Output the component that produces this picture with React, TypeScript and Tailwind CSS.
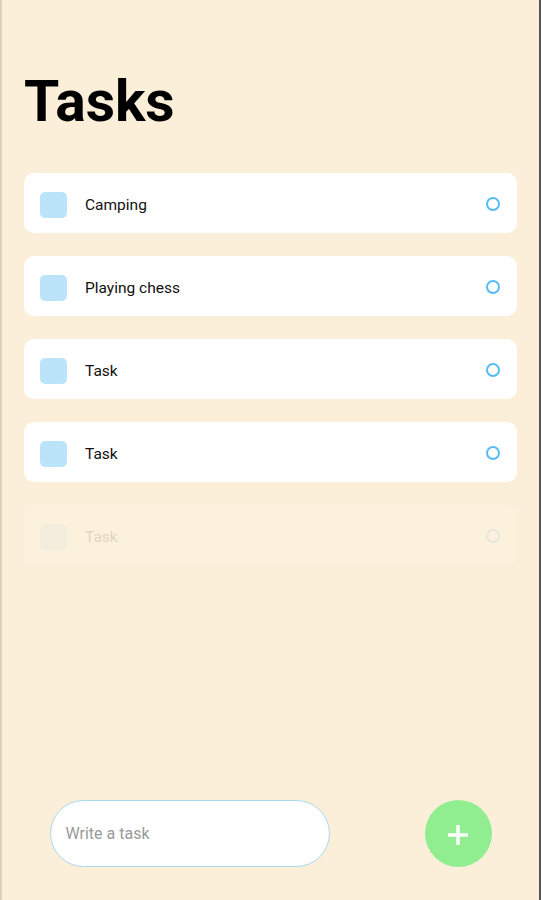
import React from "react";

const tasks = [
  { text: "Camping", faded: false },
  { text: "Playing chess", faded: false },
  { text: "Task", faded: false },
  { text: "Task", faded: false },
  { text: "Task", faded: true },
];

function TaskItem({ text, faded }: { text: string; faded: boolean }) {
  return (
    <div
      className={
        "flex h-[60px] items-center justify-between rounded-[10px] bg-white pl-4 pr-[17px] " +
        (faded ? "opacity-[0.12]" : "")
      }
    >
      <div className="flex items-center">
        <div className="mt-[3px] h-[26px] w-[27px] rounded-[5px] bg-[#55BCF6]/40" />
        <span className="ml-[18px] mt-[6px] text-[15.5px] text-[#111]">{text}</span>
      </div>
      <div className="mt-[1px] h-[14px] w-[14px] rounded-full border-[2.5px] border-[#55BCF6]" />
    </div>
  );
}

export default function App() {
  return (
    <div
      className="flex h-[900px] w-full flex-col border-l-2 border-r-2 border-l-[#ddd0ba] border-r-[#555] bg-[#fcefd9]"
      style={{ fontFamily: "Roboto, 'Noto Sans', sans-serif" }}
    >
      <div className="flex-1 px-[22px] pt-[70px]">
        <h1 className="text-[57px] font-bold leading-[64px] text-black">Tasks</h1>
        <div className="mt-[39px] flex flex-col gap-[23px]">
          {tasks.map((t, i) => (
            <TaskItem key={i} text={t.text} faded={t.faded} />
          ))}
        </div>
      </div>
      <div className="flex items-center justify-around pb-[33px]">
        <div className="flex h-[67px] w-[280px] items-center rounded-full border border-[#a9d9ef] bg-white px-[15px]">
          <span className="text-[16px] text-[#9a9a9a]">Write a task</span>
        </div>
        <div className="flex h-[67px] w-[67px] items-center justify-center rounded-full bg-[#90ee90]">
          <svg width="24" height="24" viewBox="0 0 24 24" className="mt-[2px]">
            <path d="M12 2v20M2 12h20" stroke="white" strokeWidth="3.5" strokeLinecap="butt" />
          </svg>
        </div>
      </div>
    </div>
  );
}
